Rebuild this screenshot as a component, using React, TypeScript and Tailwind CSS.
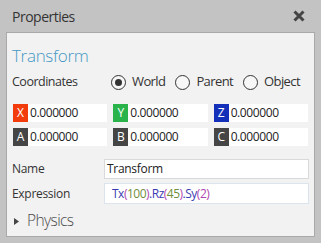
const font = { fontFamily: '"Open Sans", "Noto Sans", sans-serif' };

const coords = [
  { id: 'X', color: 'bg-[#f23c0c]', value: '0.000000' },
  { id: 'Y', color: 'bg-[#2bb34b]', value: '0.000000' },
  { id: 'Z', color: 'bg-[#1530b8]', value: '0.000000' },
  { id: 'A', color: 'bg-[#454545]', value: '0.000000' },
  { id: 'B', color: 'bg-[#454545]', value: '0.000000' },
  { id: 'C', color: 'bg-[#454545]', value: '0.000000' },
];

function Radio({ label, checked }: { label: string; checked?: boolean }) {
  return (
    <div className="flex items-center gap-[6px]">
      <span className="flex h-[15px] w-[15px] items-center justify-center rounded-full border border-[#333] bg-[#f7f7f7]">
        {checked && <span className="h-[7px] w-[7px] rounded-full bg-[#333]" />}
      </span>
      <span className="text-[13px] tracking-[-0.6px] text-[#333]">{label}</span>
    </div>
  );
}

export default function App() {
  return (
    <div className="h-[243px] w-[321px] overflow-hidden bg-[#c3c3c3]" style={font}>
      {/* Title bar */}
      <div className="flex h-[32px] items-center justify-between pl-[12px] pr-[16px]">
        <span className="text-[14px] tracking-[-0.5px] text-[#333]">Properties</span>
        <svg width="12" height="12" viewBox="0 0 12 12">
          <path d="M1.5 1.5 L10.5 10.5 M10.5 1.5 L1.5 10.5" stroke="#444" strokeWidth="3" />
        </svg>
      </div>

      {/* Panel */}
      <div className="mx-[6px] h-[205px] border border-[#a9a9a9] bg-[#f2f2f2] px-[5px] pt-[11px]">
        <div className="text-[17px] leading-[24px] font-light tracking-[-0.3px] text-[#4598c3]">Transform</div>

        <div className="mt-[4px] flex h-[20px] items-center">
          <span className="w-[99px] text-[12.5px] tracking-[-0.5px] text-[#333]">Coordinates</span>
          <div className="flex gap-[10px]">
            <Radio label="World" checked />
            <Radio label="Parent" />
            <Radio label="Object" />
          </div>
        </div>

        <div className="mt-[12px] ml-[1px] mr-[1px] grid grid-cols-3 gap-x-[6px] gap-y-[6px]">
          {coords.map((c) => (
            <div key={c.id} className="flex h-[18px] bg-white">
              <span className={`flex w-[15px] items-center justify-center text-[12px] text-white ${c.color}`}>
                {c.id}
              </span>
              <span className="pl-[2px] text-[12px] leading-[18px] tracking-[-0.4px] text-[#222]">{c.value}</span>
            </div>
          ))}
        </div>

        <div className="mt-[13px] flex items-center">
          <span className="w-[92px] text-[12px] tracking-[-0.3px] text-[#333]">Name</span>
          <div className="flex h-[20px] flex-1 items-center border border-[#d9d9d9] bg-white pl-[2px] text-[12px] tracking-[-0.3px] text-[#222]">
            Transform
          </div>
        </div>

        <div className="mt-[4px] flex items-center">
          <span className="w-[92px] text-[12px] tracking-[-0.3px] text-[#333]">Expression</span>
          <div className="flex h-[21px] flex-1 items-center border border-[#dce4ee] bg-white pl-[7px] text-[12px] tracking-[-0.5px]">
            <span className="text-[#3a3ab4]">Tx</span>
            <span className="text-[#b044b0]">(</span>
            <span className="text-[#6f8f3c]">100</span>
            <span className="text-[#b044b0]">)</span>
            <span className="text-[#3a3ab4]">.Rz</span>
            <span className="text-[#b044b0]">(</span>
            <span className="text-[#6f8f3c]">45</span>
            <span className="text-[#b044b0]">)</span>
            <span className="text-[#3a3ab4]">.Sy</span>
            <span className="text-[#b044b0]">(2)</span>
          </div>
        </div>

        <div className="mt-[6px] flex h-[22px] items-center gap-[8px] pl-[2px]">
          <svg width="5" height="7" viewBox="0 0 5 7">
            <path d="M0 0 L5 3.5 L0 7 Z" fill="#444" />
          </svg>
          <span className="text-[15.5px] font-light tracking-[-0.6px] text-[#4a4a4a]">Physics</span>
        </div>
      </div>
    </div>
  );
}
